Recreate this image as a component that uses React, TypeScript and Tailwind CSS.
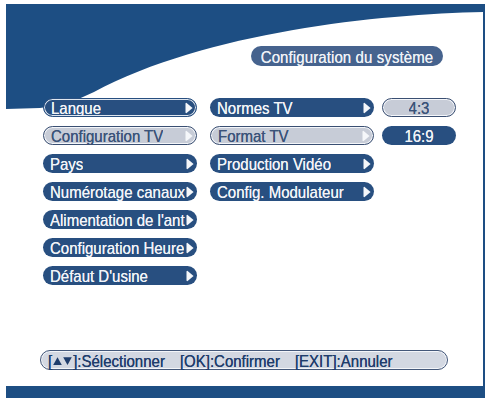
import React from "react";

function Arrow() {
  return (
    <svg
      width="8"
      height="12"
      viewBox="0 0 8 12"
      className="absolute right-[3px] top-1/2 -translate-y-1/2"
    >
      <path
        d="M1.3 0.8 Q0.5 0.8 0.5 1.7 L0.5 10.3 Q0.5 11.2 1.3 11.2 L7.6 6 Z"
        fill="#f5f7fa"
      />
    </svg>
  );
}

type Kind = "normal" | "selected" | "outlined";

function Pill({
  label,
  kind = "normal",
  arrow = true,
  center = false,
}: {
  label: string;
  kind?: Kind;
  arrow?: boolean;
  center?: boolean;
}) {
  const look =
    kind === "selected"
      ? "bg-[#c7ccd7] text-[#3b5379] border-[1.5px] border-[#3a4f72] shadow-[inset_0_0_0_1px_#f4f6fa]"
      : kind === "outlined"
      ? "bg-[#284f80] text-[#f2f4f8] border-[1px] border-[#284f80] shadow-[inset_0_0_0_1px_#dfe6ef]"
      : "bg-[#284f80] text-[#f2f4f8]";
  const align = center ? "justify-center" : "pl-[7px] pr-[6px]";
  return (
    <div
      className={`relative h-[19px] rounded-full flex items-center overflow-hidden ${look} ${align}`}
    >
      <span className="whitespace-nowrap overflow-hidden text-[15px] leading-[17px] scale-y-[1.12] [text-shadow:0_0_0.4px_currentColor]">
        {label}
      </span>
      {arrow && <Arrow />}
    </div>
  );
}

function Tri({ up }: { up?: boolean }) {
  return (
    <svg width="9" height="8" viewBox="0 0 9 8" className="inline-block">
      <path d={up ? "M4.5 0.5 L8.8 7.5 L0.2 7.5 Z" : "M0.2 0.5 L8.8 0.5 L4.5 7.5 Z"} fill="#1f3d6c" />
    </svg>
  );
}

export default function App() {
  return (
    <div className="w-[490px] h-[398px] bg-white pl-[6px] pt-[4px] font-['Liberation_Sans',Arial,sans-serif] overflow-hidden">
      <div className="relative w-[479px] h-[394px] bg-white border-r-2 border-b-[12px] border-[#1d4e83] flex flex-col">
        <svg
          className="absolute left-0 top-0"
          width="477"
          height="120"
          viewBox="0 0 477 120"
        >
          <path
            d="M0 0 L477 0 L477 8 C374 10 200 28 88 88 Q60 102 34 104 L0 105 Z"
            fill="#1d4e83"
          />
        </svg>

        <div className="relative flex pt-[42px] pl-[245px]">
          <div className="w-[192px] h-[20px] rounded-full bg-[#46638e] text-[#eef1f6] flex items-center justify-center">
            <span className="text-[15px] leading-[17px] tracking-[0.1px] scale-y-[1.12] [text-shadow:0_0_0.4px_currentColor]">
              Configuration du système
            </span>
          </div>
        </div>

        <div className="relative flex mt-[32px] pl-[37px]">
          <div className="w-[154px] flex flex-col gap-[9px]">
            <Pill label="Langue" kind="outlined" />
            <Pill label="Configuration TV" kind="selected" />
            <Pill label="Pays" />
            <Pill label="Numérotage canaux" />
            <Pill label="Alimentation de l'ant" />
            <Pill label="Configuration Heure" />
            <Pill label="Défaut D'usine" />
          </div>
          <div className="w-[164px] ml-[13px] flex flex-col gap-[9px]">
            <Pill label="Normes TV" />
            <Pill label="Format TV" kind="selected" />
            <Pill label="Production Vidéo" />
            <Pill label="Config. Modulateur" />
          </div>
          <div className="w-[74px] ml-[8px] flex flex-col gap-[9px]">
            <Pill label="4:3" kind="selected" arrow={false} center />
            <Pill label="16:9" arrow={false} center />
          </div>
        </div>

        <div className="mt-auto mb-[16px] ml-[34px] w-[408px] h-[20px] rounded-full bg-[#d3d8e2] border-[1.5px] border-[#44587a] shadow-[inset_0_0_0_1px_#f4f6fa] flex items-center pl-[7px] text-[15px] leading-[17px] text-[#1f3d6c] gap-[15px]">
          <span className="flex items-center whitespace-nowrap scale-y-[1.12] [text-shadow:0_0_0.4px_currentColor]">
            [<span className="inline-flex gap-[1px] mx-[1px]"><Tri up /><Tri /></span>]:Sélectionner
          </span>
          <span className="whitespace-nowrap scale-y-[1.12] [text-shadow:0_0_0.4px_currentColor]">[OK]:Confirmer</span>
          <span className="whitespace-nowrap scale-y-[1.12] [text-shadow:0_0_0.4px_currentColor]">[EXIT]:Annuler</span>
        </div>
      </div>
    </div>
  );
}
